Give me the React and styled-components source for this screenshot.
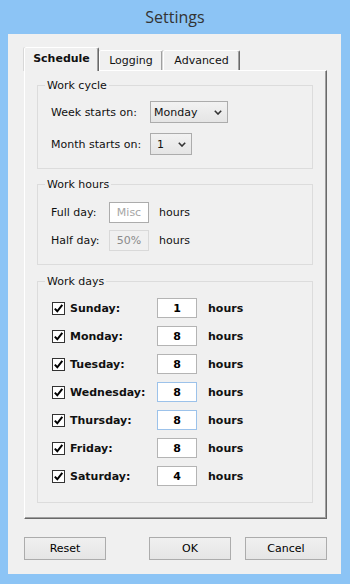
import React from "react";
import styled, { createGlobalStyle } from "styled-components";

const GlobalStyle = createGlobalStyle`
  body {
    margin: 0;
    background: #8cc4f5;
    font-family: "DejaVu Sans", Verdana, sans-serif;
    font-size: 11px;
    color: #000;
  }
  * {
    box-sizing: border-box;
  }
`;

const Window = styled.div`
  width: 350px;
  height: 584px;
  display: flex;
  flex-direction: column;
  background: #8cc4f5;
`;

const TitleBar = styled.div`
  height: 34px;
  display: flex;
  align-items: center;
  justify-content: center;
  font-family: "Open Sans", "Noto Sans", sans-serif;
  font-size: 16px;
  color: #333;
`;

const Client = styled.div`
  flex: 1;
  margin: 0 9px 10px 8px;
  padding: 13px 14px 14px 16px;
  background: #f0f0f0;
  display: flex;
  flex-direction: column;
`;

const TabStrip = styled.div`
  height: 23px;
  display: flex;
  align-items: flex-end;
`;

const Tab = styled.div`
  position: relative;
  z-index: ${(p) => (p.$active ? 1 : 0)};
  width: ${(p) => p.$width}px;
  height: ${(p) => (p.$active ? 24 : 20)}px;
  margin-bottom: ${(p) => (p.$active ? -1 : 0)}px;
  display: flex;
  align-items: center;
  justify-content: center;
  padding-bottom: ${(p) => (p.$active ? 2 : 0)}px;
  background: #f0f0f0;
  border: 1px solid;
  border-bottom: none;
  border-color: #fff #696969 transparent #fff;
  border-radius: 2px 2px 0 0;
  box-shadow: inset -1px 0 0 #a0a0a0, -1px 0 0 #d8d8d8;
  font-weight: ${(p) => (p.$active ? "bold" : "normal")};
  color: #111;
`;

const Panel = styled.div`
  height: 449px;
  display: flex;
  flex-direction: column;
  padding: 8px 13px 15px 12px;
  border: 1px solid;
  border-color: #fff #696969 #696969 #fff;
  box-shadow: inset -1px -1px 0 #a0a0a0;
`;

const Group = styled.fieldset`
  margin: ${(p) => p.$gap || 0}px 0 0;
  padding: 0;
  min-inline-size: 0;
  border: 1px solid #dcdcdc;
`;

const Legend = styled.legend`
  margin-left: 7px;
  padding: 0 2px;
  line-height: 13px;
  color: #111;
`;

const GroupBody = styled.div`
  display: flex;
  flex-direction: column;
  gap: ${(p) => p.$gap}px;
  padding: ${(p) => p.$top}px 0 ${(p) => p.$bottom}px 13px;
`;

const Row = styled.div`
  display: flex;
  align-items: center;
  height: ${(p) => p.$height}px;
`;

const Label = styled.span`
  width: ${(p) => p.$width}px;
  flex: none;
  font-weight: ${(p) => (p.$bold ? "bold" : "normal")};
  color: #111;
`;

const Unit = styled.span`
  margin-left: ${(p) => p.$gap}px;
  font-weight: ${(p) => (p.$bold ? "bold" : "normal")};
  color: #111;
`;

const ComboBox = styled.div`
  width: ${(p) => p.$width}px;
  height: 22px;
  display: flex;
  align-items: center;
  justify-content: space-between;
  padding: 0 5px 0 ${(p) => p.$indent || 3}px;
  border: 1px solid #acacac;
  background: linear-gradient(#f2f2f2, #e5e5e5);
  color: #111;
`;

const TextBox = styled.input`
  width: 40px;
  height: ${(p) => p.$height}px;
  padding: 0;
  border: 1px solid ${(p) => p.$border || "#b4b4b4"};
  background: ${(p) => (p.disabled ? "#f0f0f0" : "#fff")};
  font-family: inherit;
  font-size: 11px;
  font-weight: ${(p) => (p.$bold ? "bold" : "normal")};
  color: ${(p) => p.$color || "#000"};
  text-align: center;
  outline: none;
`;

const Check = styled.span`
  width: 13px;
  height: 13px;
  flex: none;
  margin: 0 5px 0 1px;
  display: flex;
  align-items: center;
  justify-content: center;
  border: 1px solid #333;
  background: #fff;
`;

const ButtonRow = styled.div`
  display: flex;
  margin-top: 18px;
  gap: 14px;
`;

const Button = styled.button`
  width: 82px;
  height: 23px;
  margin-left: ${(p) => (p.$push ? "auto" : "0")};
  padding: 0;
  border: 1px solid #acacac;
  background: linear-gradient(#f0f0f0, #e5e5e5);
  font-family: inherit;
  font-size: 11px;
  color: #000;
`;

const Chevron = () => (
  <svg width="8" height="5" viewBox="0 0 8 5">
    <path d="M0.8 0.8 L4 4 L7.2 0.8" fill="none" stroke="#333" strokeWidth="1.6" />
  </svg>
);

const Tick = () => (
  <svg width="11" height="11" viewBox="0 0 11 11">
    <path d="M1.8 5.6 L4.3 8.3 L9.3 1.8" fill="none" stroke="#000" strokeWidth="2" />
  </svg>
);

const days = [
  { name: "Sunday", hours: "1" },
  { name: "Monday", hours: "8" },
  { name: "Tuesday", hours: "8" },
  { name: "Wednesday", hours: "8", focus: true },
  { name: "Thursday", hours: "8", focus: true },
  { name: "Friday", hours: "8" },
  { name: "Saturday", hours: "4" },
];

const App = () => {
  return (
    <Window>
      <GlobalStyle />
      <TitleBar>Settings</TitleBar>
      <Client>
        <TabStrip>
          <Tab $active $width={75}>Schedule</Tab>
          <Tab $width={64}>Logging</Tab>
          <Tab $width={77}>Advanced</Tab>
        </TabStrip>
        <Panel>
          <Group>
            <Legend>Work cycle</Legend>
            <GroupBody $top={9} $bottom={13} $gap={10}>
              <Row $height={22}>
                <Label $width={99}>Week starts on:</Label>
                <ComboBox $width={78}>
                  Monday
                  <Chevron />
                </ComboBox>
              </Row>
              <Row $height={22}>
                <Label $width={99}>Month starts on:</Label>
                <ComboBox $width={42} $indent={6}>
                  1
                  <Chevron />
                </ComboBox>
              </Row>
            </GroupBody>
          </Group>

          <Group $gap={9}>
            <Legend>Work hours</Legend>
            <GroupBody $top={11} $bottom={13} $gap={7}>
              <Row $height={21}>
                <Label $width={58}>Full day:</Label>
                <TextBox $height={21} $border="#acacac" $color="#a6a6a6" value="Misc" readOnly />
                <Unit $gap={10}>hours</Unit>
              </Row>
              <Row $height={21}>
                <Label $width={58}>Half day:</Label>
                <TextBox $height={21} $border="#d9d9d9" $color="#8a8a8a" value="50%" disabled readOnly />
                <Unit $gap={10}>hours</Unit>
              </Row>
            </GroupBody>
          </Group>

          <Group $gap={10}>
            <Legend>Work days</Legend>
            <GroupBody $top={10} $bottom={16} $gap={8}>
              {days.map((day) => (
                <Row $height={20} key={day.name}>
                  <Check>
                    <Tick />
                  </Check>
                  <Label $width={87} $bold>
                    {day.name}:
                  </Label>
                  <TextBox
                    $height={20}
                    $bold
                    $border={day.focus ? "#9cc2ea" : "#b4b4b4"}
                    value={day.hours}
                    readOnly
                  />
                  <Unit $gap={11} $bold>
                    hours
                  </Unit>
                </Row>
              ))}
            </GroupBody>
          </Group>
        </Panel>
        <ButtonRow>
          <Button>Reset</Button>
          <Button $push>OK</Button>
          <Button>Cancel</Button>
        </ButtonRow>
      </Client>
    </Window>
  );
};

export default App;
